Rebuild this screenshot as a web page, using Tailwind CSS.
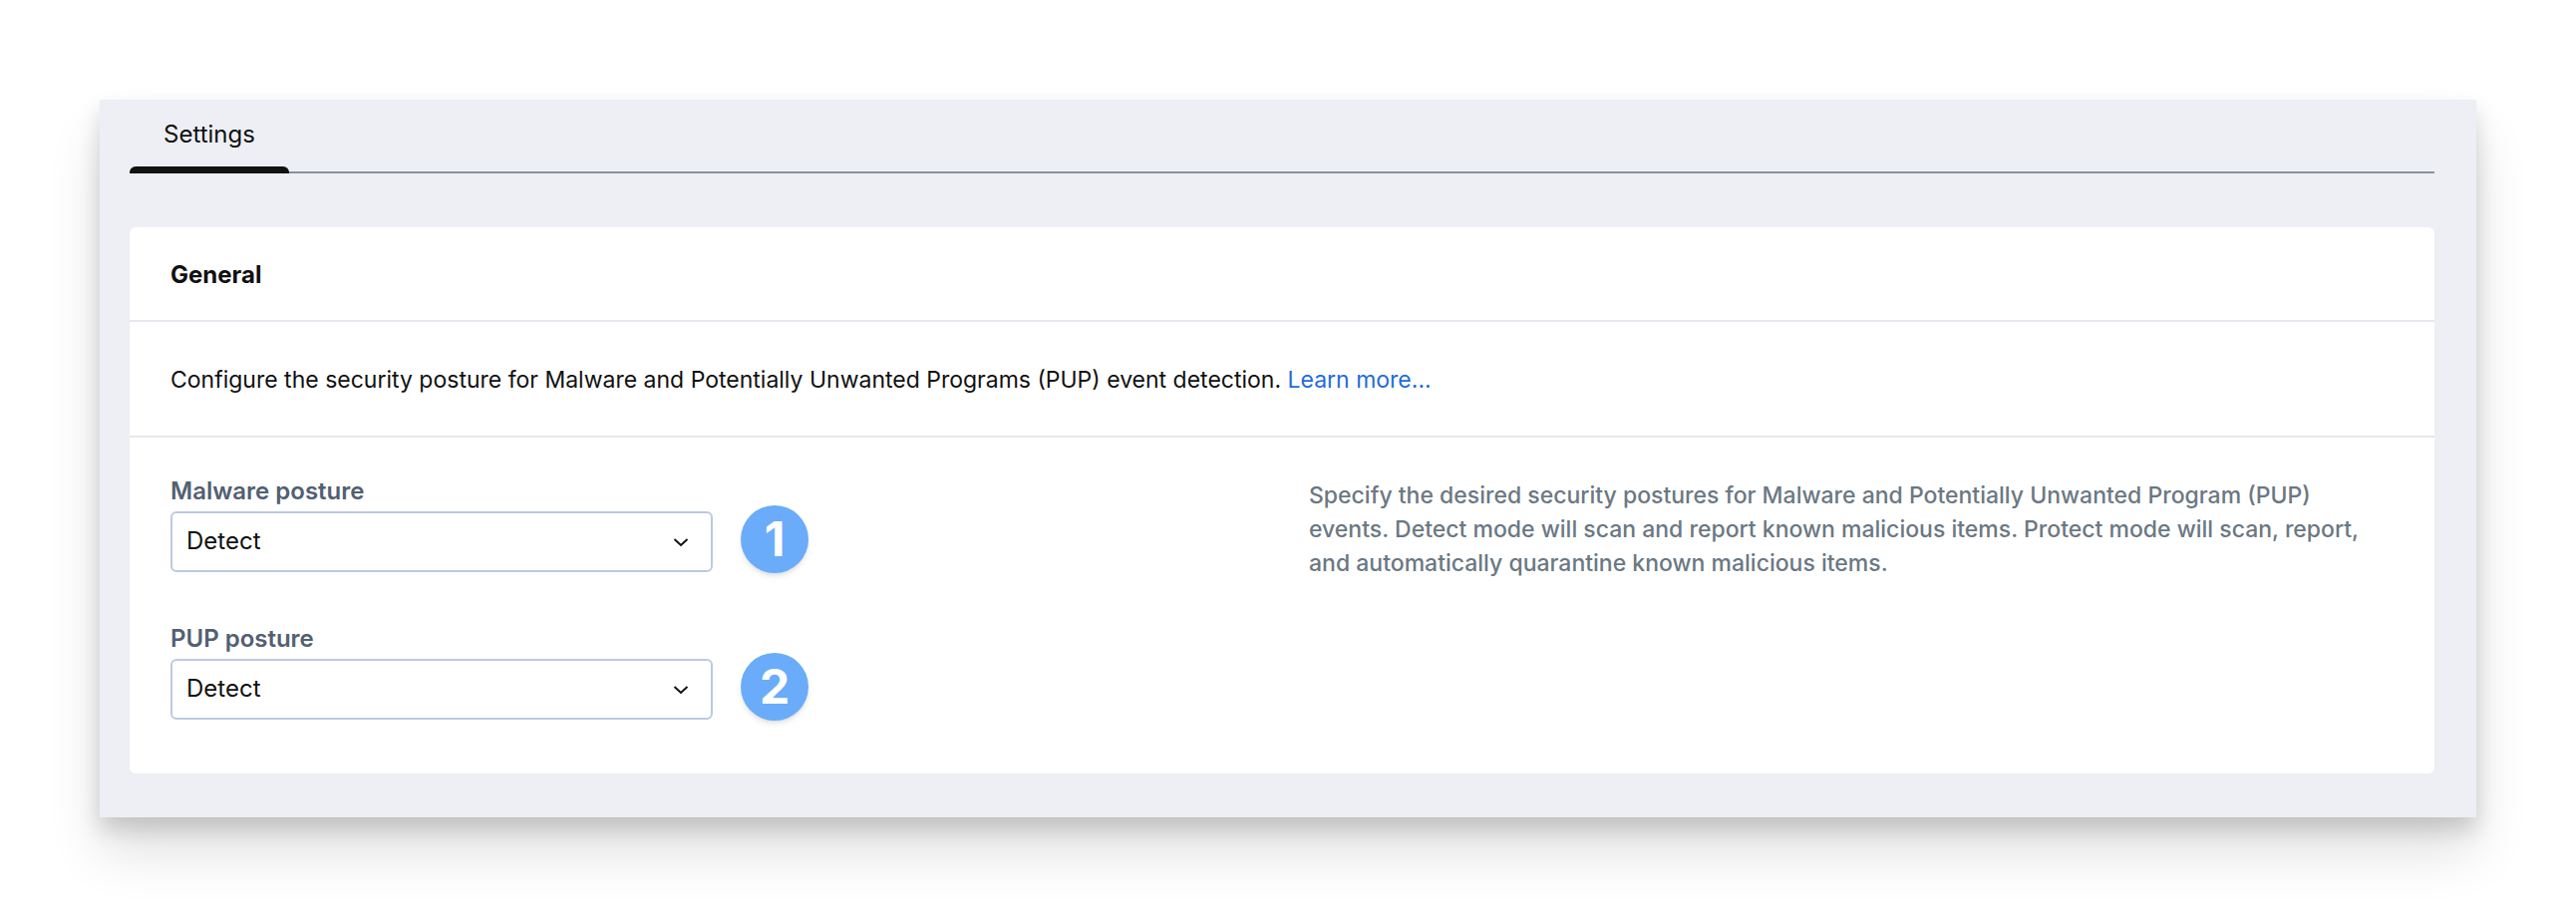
<!DOCTYPE html>
<html lang="en">
<head>
    <meta charset="UTF-8">
    <meta name="viewport" content="width=device-width, initial-scale=1.0">
    <title>Settings</title>
    <script src="https://cdn.jsdelivr.net/npm/@tailwindcss/browser@4"></script>
</head>
<body class="bg-white p-[100px] font-['Inter','Liberation_Sans',sans-serif] text-[24px] leading-[34px] text-[#111111]">
    <main class="bg-[#eeeff5] pl-[30px] pr-[42px] pb-11 shadow-[0_12px_20px_rgba(0,0,0,0.15),0_35px_50px_rgba(0,0,0,0.12)]">
        <!-- Tabs -->
        <nav class="flex border-b-2 border-[#8b939b]">
            <button type="button" class="-mb-[2px] flex flex-col">
                <span class="px-[34px] pt-[18px] pb-[15px]">Settings</span>
                <span class="h-[7px] w-full rounded-t-md bg-[#111111]"></span>
            </button>
        </nav>

        <!-- General card -->
        <section class="mt-[54px] rounded-md bg-white">
            <h2 class="border-b-2 border-[#e8e8ef] px-[41px] pt-[31px] pb-7 font-bold">General</h2>

            <p class="border-b-2 border-[#e8e8ef] px-[41px] pt-[41px] pb-[39px] text-[23px]">
                Configure the security posture for Malware and Potentially Unwanted Programs (PUP) event detection.
                <a href="#" class="text-[#1f6bdc]">Learn more...</a>
            </p>

            <div class="grid grid-cols-2 gap-[54px] px-[41px] pt-[37px] pb-[54px]">
                <form class="space-y-[50px]">
                    <!-- Malware posture -->
                    <div>
                        <label for="malwarePosture" class="block pb-[3px] font-semibold text-[#526072]">Malware posture</label>
                        <div class="relative w-1/2">
                            <select id="malwarePosture" name="malwarePosture" class="block h-[61px] w-full appearance-none rounded-md border-2 border-[#bccae0] bg-white px-[14px] pb-[2px] text-[#111111]">
                                <option>Detect</option>
                                <option>Protect</option>
                            </select>
                            <svg class="pointer-events-none absolute top-1/2 right-6 h-4 w-4 -translate-y-1/2" viewBox="0 0 16 16" fill="none" stroke="#111111" stroke-width="2">
                                <path d="M1.5 5 8 11 14.5 5" />
                            </svg>
                            <span class="absolute -top-[6px] left-full ml-7 flex h-[68px] w-[68px] items-center justify-center rounded-full bg-[#6aacfa] text-5xl font-bold text-white shadow-md shadow-black/10">1</span>
                        </div>
                    </div>

                    <!-- PUP posture -->
                    <div>
                        <label for="pupPosture" class="block pb-[3px] font-semibold text-[#526072]">PUP posture</label>
                        <div class="relative w-1/2">
                            <select id="pupPosture" name="pupPosture" class="block h-[61px] w-full appearance-none rounded-md border-2 border-[#bccae0] bg-white px-[14px] pb-[2px] text-[#111111]">
                                <option>Detect</option>
                                <option>Protect</option>
                            </select>
                            <svg class="pointer-events-none absolute top-1/2 right-6 h-4 w-4 -translate-y-1/2" viewBox="0 0 16 16" fill="none" stroke="#111111" stroke-width="2">
                                <path d="M1.5 5 8 11 14.5 5" />
                            </svg>
                            <span class="absolute -top-[6px] left-full ml-7 flex h-[68px] w-[68px] items-center justify-center rounded-full bg-[#6aacfa] text-5xl font-bold text-white shadow-md shadow-black/10">2</span>
                        </div>
                    </div>
                </form>

                <p class="pt-1 pr-4 text-[23px] font-medium text-[#6b7883]">
                    Specify the desired security postures for Malware and Potentially Unwanted Program (PUP) events. Detect mode will scan and report known malicious items. Protect mode will scan, report, and automatically quarantine known malicious items.
                </p>
            </div>
        </section>
    </main>
</body>
</html>
